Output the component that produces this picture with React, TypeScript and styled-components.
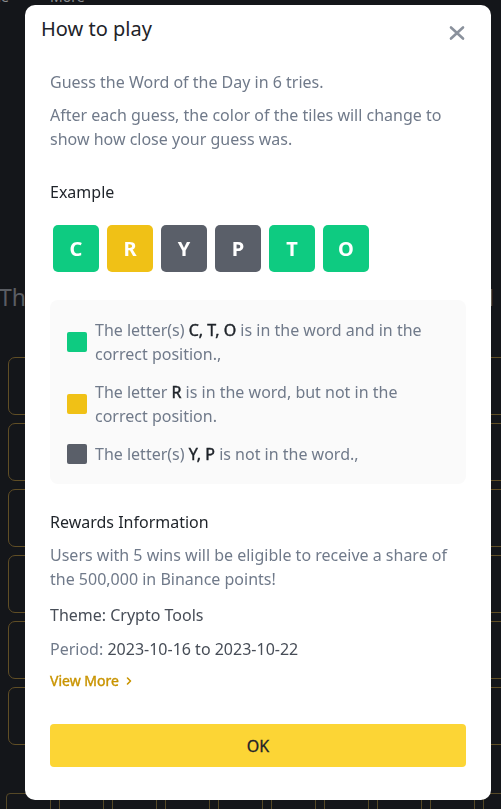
import React from "react";
import styled, { createGlobalStyle } from "styled-components";

const GlobalStyle = createGlobalStyle`
  html, body { margin: 0; padding: 0; }
  body {
    background: #1e2026;
    overflow: hidden;
    font-family: "Noto Sans", "Liberation Sans", sans-serif;
  }
  * { box-sizing: border-box; }
`;

/* ---------- game page underneath the dialog ---------- */

const Page = styled.div`
  height: 809px;
  overflow: hidden;
  display: flex;
  flex-direction: column;
`;

const NavRow = styled.nav`
  display: flex;
  gap: 41px;
  margin: -11px 0 0 -30px;
  height: 16px;
  font-size: 14px;
  line-height: 16px;
  color: #c4c7cc;
  white-space: nowrap;
`;

const HeadingRow = styled.div`
  display: flex;
  justify-content: space-between;
  margin: 276px 0 0 -1px;
  padding-right: 4px;
  height: 32px;
  font-size: 23px;
  line-height: 32px;
  color: #82868f;
  white-space: nowrap;
`;

const Board = styled.div`
  display: grid;
  grid-template-columns: repeat(8, 58px);
  grid-auto-rows: 58px;
  gap: 8px;
  margin-top: 44px;
  padding-left: 8px;
`;

const BoardCell = styled.div`
  border: 1.5px solid #8a7036;
  border-radius: 7px;
`;

const Keyboard = styled.div`
  display: flex;
  gap: 7.5px;
  margin-top: 48px;
  padding-left: 5.5px;
`;

const Key = styled.div`
  flex: 0 0 45.5px;
  height: 56px;
  border: 1px solid #7a6838;
  border-radius: 4px;
  display: flex;
  justify-content: center;
  padding-top: 10px;
  font-size: 16px;
  color: #9ca0a8;
`;

const Overlay = styled.div`
  position: fixed;
  inset: 0;
  background: rgba(0, 0, 0, 0.3);
`;

/* ---------- dialog ---------- */

const Dialog = styled.div`
  position: fixed;
  top: 5px;
  left: 25px;
  width: 466px;
  height: 795px;
  background: #ffffff;
  border-radius: 10px;
  display: flex;
  flex-direction: column;
`;

const Header = styled.div`
  display: flex;
  justify-content: space-between;
  align-items: flex-start;
  padding: 10px 22px 0 16px;
`;

const Title = styled.h2`
  margin: 0;
  font-size: 20px;
  line-height: 28px;
  font-weight: 400;
  color: #1e2329;
`;

const CloseButton = styled.button`
  width: 24px;
  height: 24px;
  margin-top: 6px;
  padding: 0;
  border: 0;
  background: none;
  display: flex;
  align-items: center;
  justify-content: center;
  color: #8a919c;
  cursor: pointer;
`;

const Body = styled.div`
  display: flex;
  flex-direction: column;
  padding: 0 25px;
  flex: 1;
`;

const Text = styled.p<{ $mt: number; $tone?: "muted" | "strong" | "mid" }>`
  margin: ${(p) => p.$mt}px 0 0;
  font-size: 16px;
  line-height: 24px;
  color: ${(p) =>
    p.$tone === "strong" ? "#1e2329" : p.$tone === "mid" ? "#474d57" : "#707a8a"};
`;

const Value = styled.span`
  color: #474d57;
`;

const TileRow = styled.div`
  display: flex;
  gap: 8px;
  margin-top: 21px;
  padding-left: 3px;
`;

type Mark = "hit" | "near" | "miss";

const markColor: Record<Mark, string> = {
  hit: "#0ecb81",
  near: "#f0c116",
  miss: "#5a5f69",
};

const Tile = styled.div<{ $mark: Mark }>`
  width: 46px;
  height: 47px;
  border-radius: 5px;
  background: ${(p) => markColor[p.$mark]};
  color: #ffffff;
  font-size: 20px;
  font-weight: 700;
  display: flex;
  align-items: center;
  justify-content: center;
`;

const Legend = styled.div`
  margin-top: 28px;
  padding: 18px 16px;
  background: #fafafa;
  border-radius: 8px;
  display: flex;
  flex-direction: column;
  gap: 14px;
`;

const LegendItem = styled.div`
  display: flex;
  align-items: center;
  gap: 8px;
`;

const Swatch = styled.span<{ $mark: Mark }>`
  flex: 0 0 20px;
  height: 20px;
  margin-left: 1px;
  border-radius: 2px;
  background: ${(p) => markColor[p.$mark]};
`;

const LegendText = styled.span`
  font-size: 16px;
  line-height: 24px;
  color: #707a8a;
`;

/* medium-weight highlight for the letters named in each rule */
const Letters = styled.b`
  font-weight: 400;
  color: #1e2329;
  -webkit-text-stroke: 0.45px #1e2329;
`;

const MoreLink = styled.a`
  margin-top: 10px;
  display: flex;
  align-items: center;
  gap: 6px;
  font-size: 14px;
  line-height: 20px;
  font-weight: 400;
  -webkit-text-stroke: 0.4px #c99400;
  color: #c99400;
  text-decoration: none;
  cursor: pointer;
`;

const OkButton = styled.button`
  margin-top: 33px;
  height: 43px;
  border: 0;
  border-radius: 4px;
  background: #fcd535;
  color: #1e2329;
  font-family: inherit;
  font-size: 16px;
  font-weight: 400;
  -webkit-text-stroke: 0.3px #1e2329;
  cursor: pointer;
`;

const word: { ch: string; mark: Mark }[] = [
  { ch: "C", mark: "hit" },
  { ch: "R", mark: "near" },
  { ch: "Y", mark: "miss" },
  { ch: "P", mark: "miss" },
  { ch: "T", mark: "hit" },
  { ch: "O", mark: "hit" },
];

const keys = ["Q", "W", "E", "R", "T", "Y", "U", "I", "O", "P"];

export default function App() {
  return (
    <>
      <GlobalStyle />
      <Page>
        <NavRow>
          <span>Guide</span>
          <span>More</span>
        </NavRow>
        <HeadingRow>
          <span>The Word of the Day</span>
          <span>1</span>
        </HeadingRow>
        <Board>
          {Array.from({ length: 48 }, (_, i) => (
            <BoardCell key={i} />
          ))}
        </Board>
        <Keyboard>
          {keys.map((k) => (
            <Key key={k}>{k}</Key>
          ))}
        </Keyboard>
      </Page>
      <Overlay />
      <Dialog role="dialog" aria-label="How to play">
        <Header>
          <Title>How to play</Title>
          <CloseButton aria-label="Close">
            <svg width="16" height="16" viewBox="0 0 16 16">
              <path
                d="M2 2.5 L14 13.5 M14 2.5 L2 13.5"
                stroke="currentColor"
                strokeWidth="2.6"
                strokeLinecap="round"
              />
            </svg>
          </CloseButton>
        </Header>
        <Body>
          <Text $mt={25}>Guess the Word of the Day in 6 tries.</Text>
          <Text $mt={9}>
            After each guess, the color of the tiles will change to show how close your
            guess was.
          </Text>
          <Text $mt={29} $tone="strong">
            Example
          </Text>
          <TileRow>
            {word.map((t, i) => (
              <Tile key={i} $mark={t.mark}>
                {t.ch}
              </Tile>
            ))}
          </TileRow>
          <Legend>
            <LegendItem>
              <Swatch $mark="hit" />
              <LegendText>
                The letter(s) <Letters>C, T, O</Letters> is in the word and in the
                correct position.,
              </LegendText>
            </LegendItem>
            <LegendItem>
              <Swatch $mark="near" />
              <LegendText>
                The letter <Letters>R</Letters> is in the word, but not in the correct
                position.
              </LegendText>
            </LegendItem>
            <LegendItem>
              <Swatch $mark="miss" />
              <LegendText>
                The letter(s) <Letters>Y, P</Letters> is not in the word.,
              </LegendText>
            </LegendItem>
          </Legend>
          <Text $mt={26} $tone="strong">
            Rewards Information
          </Text>
          <Text $mt={9}>
            Users with 5 wins will be eligible to receive a share of the 500,000 in
            Binance points!
          </Text>
          <Text $mt={12} $tone="mid">
            Theme: Crypto Tools
          </Text>
          <Text $mt={10}>
            Period: <Value>2023-10-16 to 2023-10-22</Value>
          </Text>
          <MoreLink>
            View More
            <svg width="8" height="10" viewBox="0 0 8 10">
              <path
                d="M2.5 2 L5.5 5 L2.5 8"
                fill="none"
                stroke="currentColor"
                strokeWidth="1.6"
                strokeLinecap="round"
                strokeLinejoin="round"
              />
            </svg>
          </MoreLink>
          <OkButton>OK</OkButton>
        </Body>
      </Dialog>
    </>
  );
}
